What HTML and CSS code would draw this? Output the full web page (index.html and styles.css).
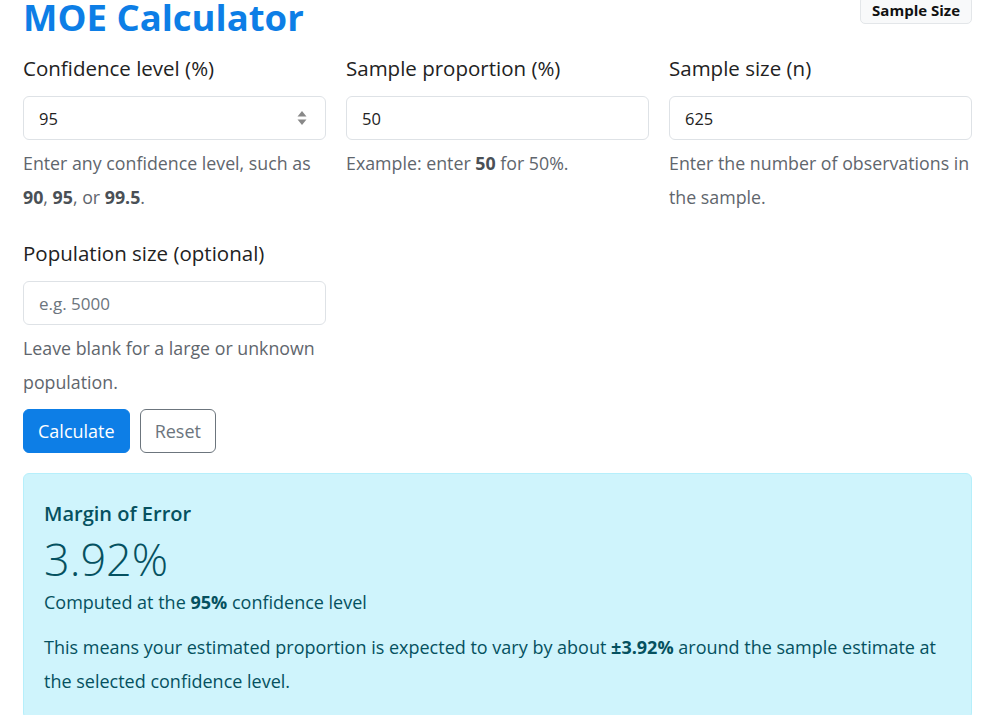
FILE: index.html
```html
<!DOCTYPE html>
<html lang="en">
<head>
  <meta charset="UTF-8" />
  <meta name="viewport" content="width=device-width, initial-scale=1.0"/>
  <title>MOE Calculator</title>
  <link rel="stylesheet" href="styles.css">
</head>
<body>

  <div class="container">
    <div class="header">
      <h1 class="title">MOE Calculator</h1>
      <a class="nav-btn" href="#">Sample Size</a>
    </div>

    <div class="fields">
      <div class="field">
        <label class="field-label" for="conf">Confidence level (%)</label>
        <div class="number-wrap">
          <input class="form-input" type="text" id="conf" value="95">
          <span class="spinner">
            <svg width="10" height="20" viewBox="0 0 10 20"><path d="M0.5 8.5 L5 3 L9.5 8.5 Z" fill="#888"/><path d="M0.5 11.5 L5 17 L9.5 11.5 Z" fill="#888"/></svg>
          </span>
        </div>
        <div class="help">Enter any confidence level, such as <b>90</b>, <b>95</b>, or <b>99.5</b>.</div>
      </div>

      <div class="field">
        <label class="field-label" for="prop">Sample proportion (%)</label>
        <input class="form-input" type="text" id="prop" value="50">
        <div class="help">Example: enter <b>50</b> for 50%.</div>
      </div>

      <div class="field">
        <label class="field-label" for="n">Sample size (n)</label>
        <input class="form-input" type="text" id="n" value="625">
        <div class="help">Enter the number of observations in the sample.</div>
      </div>

      <div class="field">
        <label class="field-label" for="pop">Population size (optional)</label>
        <input class="form-input" type="text" id="pop" placeholder="e.g. 5000">
        <div class="help">Leave blank for a large or unknown population.</div>
      </div>
    </div>

    <div class="actions">
      <button class="btn btn-primary">Calculate</button>
      <button class="btn btn-outline">Reset</button>
    </div>

    <div class="result-box">
      <div class="result-title">Margin of Error</div>
      <div class="result-value">3.92%</div>
      <div class="result-sub">Computed at the <b>95%</b> confidence level</div>
      <p class="result-text">This means your estimated proportion is expected to vary by about <b>±3.92%</b> around the sample estimate at the selected confidence level.</p>
    </div>
  </div>

</body>
</html>
```

FILE: styles.css
```css
* {
  box-sizing: border-box;
}

body {
  margin: 0;
  font-family: "Open Sans", "Noto Sans", sans-serif;
  background: #fff;
  color: #212529;
}

.container {
  padding: 0 23px;
  margin-top: -6px;
}

.header {
  display: flex;
  justify-content: space-between;
  align-items: flex-start;
}

.title {
  margin: 0;
  font-size: 36.5px;
  line-height: 46px;
  font-weight: 700;
  color: #0d7ee6;
}

.nav-btn {
  margin-top: 2px;
  padding: 0 11px;
  height: 28px;
  line-height: 26px;
  font-size: 15px;
  font-weight: 700;
  color: #111;
  text-decoration: none;
  background: #f8f9fa;
  border: 1px solid #e3e6e9;
  border-radius: 5px;
}

.fields {
  display: grid;
  grid-template-columns: repeat(3, 1fr);
  column-gap: 20px;
  row-gap: 24px;
  margin-top: 13px;
}

.field-label {
  display: block;
  font-size: 20.5px;
  line-height: 30px;
  color: #222;
  margin-bottom: 13px;
}

.number-wrap {
  position: relative;
}

.spinner {
  position: absolute;
  right: 19px;
  top: 12px;
}

.form-input {
  display: block;
  width: 100%;
  height: 44px;
  padding: 0 15px;
  font-family: inherit;
  font-size: 16.5px;
  color: #222;
  border: 1px solid #dee2e6;
  border-radius: 6px;
  background: #fff;
}

.form-input::placeholder {
  color: #6c757d;
  font-size: 17px;
}

.help {
  margin-top: 6px;
  font-size: 17.8px;
  line-height: 34px;
  color: #5f666d;
}

.help b {
  color: #4a5056;
}

.actions {
  display: flex;
  gap: 10px;
  margin-top: 10px;
}

.btn {
  height: 44px;
  padding: 0 14px;
  font-family: inherit;
  font-size: 18px;
  border-radius: 6px;
  cursor: pointer;
}

.btn-primary {
  background: #0d7ee6;
  color: #fff;
  border: 1px solid #0d7ee6;
}

.btn-outline {
  background: #fff;
  color: #6c757d;
  border: 1px solid #6c757d;
}

.result-box {
  margin-top: 20px;
  padding: 27px 20px 20px;
  background: #cff4fc;
  border: 1px solid #b6effb;
  border-radius: 6px;
  color: #055160;
}

.result-title {
  font-size: 20px;
  font-weight: 600;
  line-height: 26px;
}

.result-value {
  font-size: 45px;
  font-weight: 300;
  line-height: 56px;
  margin-top: 4px;
}

.result-sub {
  font-size: 18px;
  line-height: 30px;
}

.result-text {
  margin: 13px 0 0;
  font-size: 18px;
  line-height: 34px;
}
```
